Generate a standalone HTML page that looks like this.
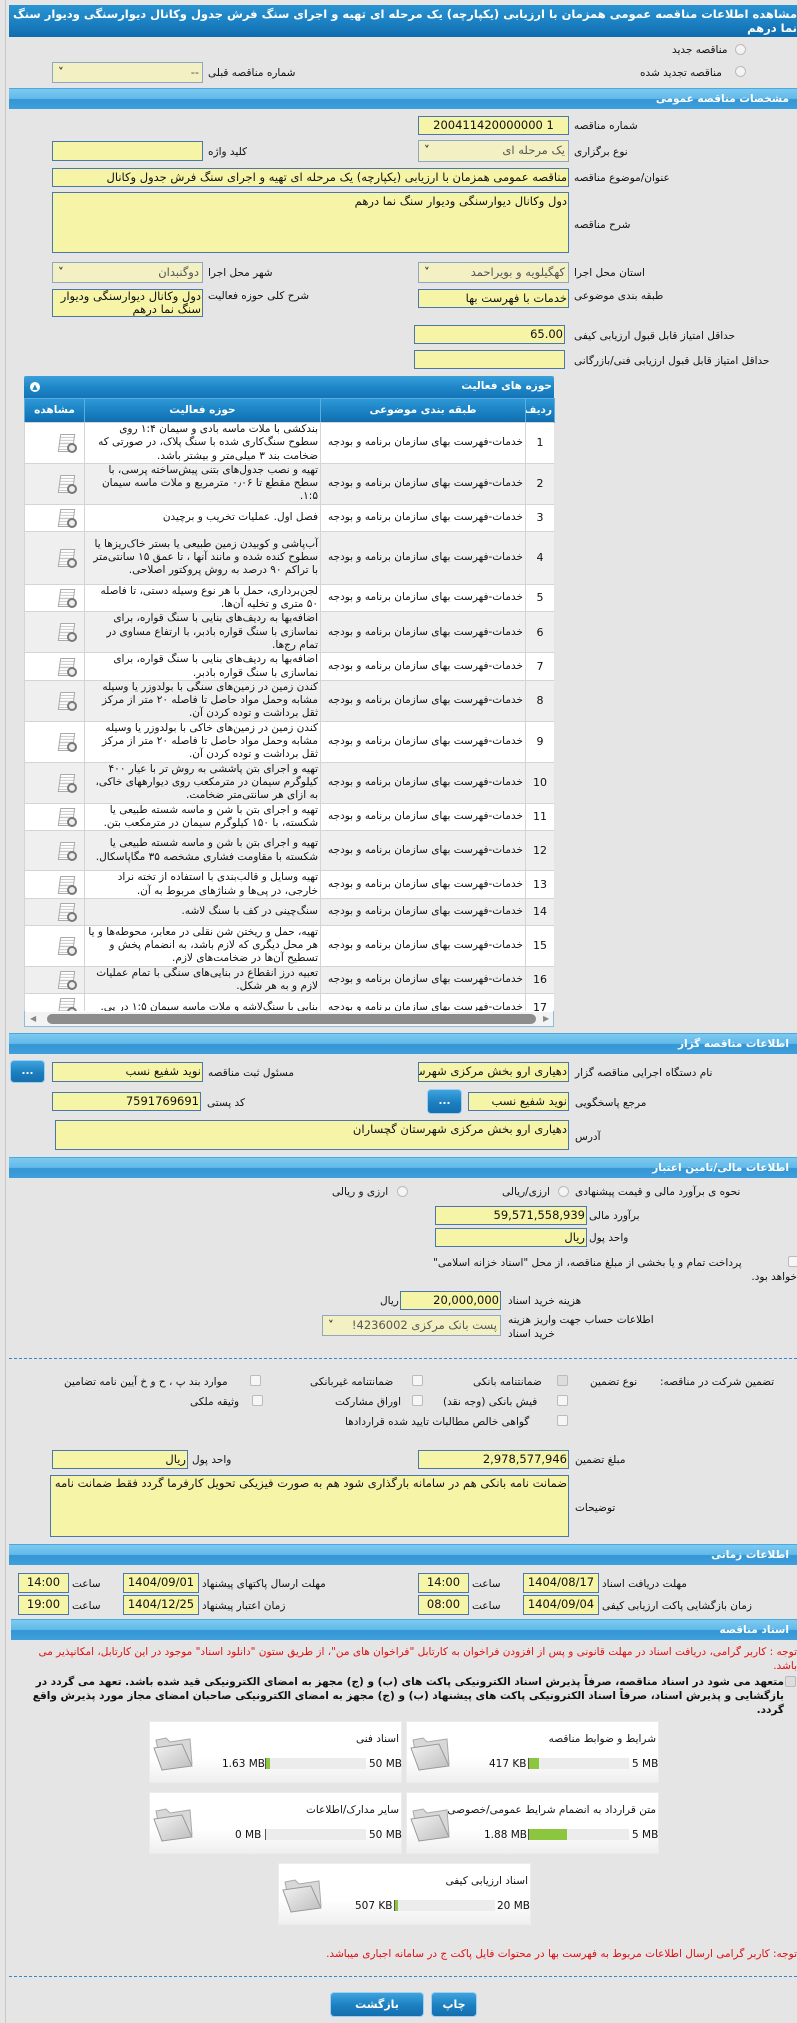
<!DOCTYPE html>
<html><head><meta charset="utf-8">
<style>
*{box-sizing:border-box;margin:0;padding:0}
body{width:797px;height:2023px;background:#e5e5e5;font-family:"DejaVu Sans","Liberation Sans",sans-serif;font-size:10.5px;color:#111;position:relative;overflow:hidden}
.a{position:absolute;white-space:nowrap;direction:rtl;line-height:14px}
.l{direction:ltr}
.bar{position:absolute;left:9px;right:0;height:21px;background:linear-gradient(#7ccaf1,#62b9e8 48%,#3596d5 52%,#3f9fdc);border-top:1px solid #4aa8e0;color:#fff;font-weight:bold;font-size:10.5px;direction:rtl;padding-right:8px;line-height:20px}
.in{position:absolute;background:#f6f4a6;border:1px solid #4a78ad;direction:rtl;white-space:nowrap;overflow:hidden;font-size:11.5px;line-height:17px;padding:0 1px}
.sel{position:absolute;background:#f3f1c4;border:1px solid #8fa7c2;direction:rtl;white-space:nowrap;overflow:hidden;font-size:11.5px;line-height:19px;padding:0 3px;color:#555}
.sel:after{content:"˅";position:absolute;left:5px;top:0;color:#333;font-weight:bold}
.radio{position:absolute;width:11px;height:11px;border-radius:50%;border:1px solid #bbb;background:#f4f4f4}
.cb{position:absolute;width:11px;height:11px;border:1px solid #bbb;background:#f6f6f6;border-radius:2px}
.btn{position:absolute;background:linear-gradient(#3ea3de,#1c7fc0 55%,#166fae);border-radius:4px;color:#fff;text-align:center;font-weight:bold;border:1px solid #9cd0f0}
table{border-collapse:collapse;table-layout:fixed;direction:rtl;font-size:10.5px}
td{border:1px solid #d4d4d4;overflow:hidden;vertical-align:middle;line-height:13.3px;padding:0 2px}
.tw{background:#fff}.tg{background:#efefef}
.box{position:absolute;width:253px;height:62px;background:linear-gradient(#fff,#fff 60%,#efefef);border:1px solid #ececec}
.red{color:#e01010}
#rows td:first-child{text-align:center;font-size:11px}
#rows td.ic{position:relative}
#rows td.ic:before{content:"";position:absolute;left:34px;top:50%;margin-top:-9px;width:13px;height:16px;border:1px solid #aaa;background:repeating-linear-gradient(#fff 0 2px,#c8c8c8 2px 3px);transform:skewX(-8deg)}
#rows td.ic:after{content:"";position:absolute;left:42px;top:50%;margin-top:0px;width:6px;height:6px;border:2px solid #777;border-radius:50%;background:#eee}
</style></head><body>
<div style="position:absolute;left:5px;top:0;width:1px;height:2023px;background:#c8c8c8"></div>

<div style="position:absolute;left:9px;right:0;top:5px;height:32px;background:linear-gradient(#2a94d2,#1d82c3 50%,#0f6cae);color:#fff;font-weight:bold;font-size:11.5px;direction:rtl;line-height:14px;padding-top:2px;white-space:nowrap;overflow:hidden">مشاهده اطلاعات مناقصه عمومی همزمان با ارزیابی (یکپارچه) یک مرحله ای تهیه و اجرای سنگ فرش جدول وکانال دیوارسنگی ودیوار سنگ<br>نما درهم</div>

<div class="radio" style="left:735px;top:44px"></div><div class="a" style="left:672px;top:43px">مناقصه جدید</div>
<div class="radio" style="left:735px;top:66px"></div><div class="a" style="left:640px;top:66px">مناقصه تجدید شده</div>
<div class="sel" style="left:52px;top:62px;width:151px;height:21px">--</div>
<div class="a" style="left:208px;top:66px">شماره مناقصه قبلی</div>

<div class="bar" style="top:88px">مشخصات مناقصه عمومی</div>

<div class="in" style="left:418px;top:116px;width:151px;height:19px;text-align:center;direction:ltr">200411420000000 1</div>
<div class="a" style="left:574px;top:119px">شماره مناقصه</div>
<div class="sel" style="left:418px;top:140px;width:151px;height:22px">یک مرحله ای</div>
<div class="a" style="left:574px;top:145px">نوع برگزاری</div>
<div class="in" style="left:52px;top:141px;width:151px;height:20px"></div>
<div class="a" style="left:208px;top:145px">کلید واژه</div>
<div class="in" style="left:52px;top:168px;width:517px;height:19px">مناقصه عمومی همزمان با ارزیابی (یکپارچه) یک مرحله ای تهیه و اجرای سنگ فرش جدول وکانال</div>
<div class="a" style="left:574px;top:171px">عنوان/موضوع مناقصه</div>
<div class="in" style="left:52px;top:192px;width:517px;height:61px;white-space:normal">دول وکانال دیوارسنگی ودیوار سنگ نما درهم</div>
<div class="a" style="left:574px;top:218px">شرح مناقصه</div>
<div class="sel" style="left:418px;top:262px;width:151px;height:21px">کهگیلویه و بویراحمد</div>
<div class="a" style="left:574px;top:266px">استان محل اجرا</div>
<div class="sel" style="left:52px;top:262px;width:151px;height:21px">دوگنبدان</div>
<div class="a" style="left:208px;top:266px">شهر محل اجرا</div>
<div class="in" style="left:418px;top:289px;width:151px;height:19px">خدمات با فهرست بها</div>
<div class="a" style="left:574px;top:289px">طبقه بندی موضوعی</div>
<div class="in" style="left:52px;top:289px;width:151px;height:28px;white-space:normal;line-height:13px">دول وکانال دیوارسنگی ودیوار سنگ نما درهم</div>
<div class="a" style="left:208px;top:289px">شرح کلی حوزه فعالیت</div>
<div class="in" style="left:414px;top:325px;width:151px;height:19px">65.00</div>
<div class="a" style="left:574px;top:329px">حداقل امتیاز قابل قبول ارزیابی کیفی</div>
<div class="in" style="left:414px;top:350px;width:151px;height:19px"></div>
<div class="a" style="left:574px;top:354px">حداقل امتیاز قابل قبول ارزیابی فنی/بازرگانی</div>

<div style="position:absolute;left:24px;top:376px;width:530px;height:651px;background:#fff;border:1px solid #8bbde0"></div>
<div style="position:absolute;left:24px;top:376px;width:530px;height:22px;background:linear-gradient(#3aa0dc,#1f87c8 50%,#1474b8);color:#fff;font-weight:bold;direction:rtl;line-height:20px;padding-right:2px;border-radius:3px 3px 0 0">حوزه های فعالیت</div>
<div style="position:absolute;left:30px;top:382px;width:10px;height:10px;border-radius:50%;background:#fff;color:#1f87c8;font-size:7px;line-height:10px;text-align:center">▲</div>
<table style="position:absolute;left:24px;top:398px;width:530px">
<colgroup><col style="width:29px"><col style="width:205px"><col style="width:236px"><col style="width:60px"></colgroup>
<tr style="height:24px;background:linear-gradient(#2e98d6,#1b82c4 50%,#0f6cae);color:#fff;font-weight:bold;text-align:center"><td style="border-color:#5aaee0">ردیف</td><td style="border-color:#5aaee0">طبقه بندی موضوعی</td><td style="border-color:#5aaee0">حوزه فعالیت</td><td style="border-color:#5aaee0">مشاهده</td></tr>
</table>
<div id="rows" style="position:absolute;left:24px;top:422px;width:530px;height:589px;overflow:hidden">
<table style="width:530px">
<colgroup><col style="width:29px"><col style="width:205px"><col style="width:236px"><col style="width:60px"></colgroup>
<tbody>
<tr class="tw" style="height:40px"><td>1</td><td>خدمات-فهرست بهای سازمان برنامه و بودجه</td><td>بندکشی با ملات ماسه بادی و سیمان ۱:۴ روی سطوح سنگ‌کاری شده با سنگ پلاک، در صورتی که ضخامت بند ۳ میلی‌متر و بیشتر باشد.</td><td class="ic"></td></tr>
<tr class="tg" style="height:40px"><td>2</td><td>خدمات-فهرست بهای سازمان برنامه و بودجه</td><td>تهیه و نصب جدول‌های بتنی پیش‌ساخته پرسی، با سطح مقطع تا ۰٫۰۶ مترمربع و ملات ماسه سیمان ۱:۵.</td><td class="ic"></td></tr>
<tr class="tw" style="height:27px"><td>3</td><td>خدمات-فهرست بهای سازمان برنامه و بودجه</td><td>فصل اول. عملیات تخریب و برچیدن</td><td class="ic"></td></tr>
<tr class="tg" style="height:53px"><td>4</td><td>خدمات-فهرست بهای سازمان برنامه و بودجه</td><td>آب‌پاشی و کوبیدن زمین طبیعی یا بستر خاک‌ریزها یا سطوح کنده شده و مانند آنها ، تا عمق ۱۵ سانتی‌متر با تراکم ۹۰ درصد به روش پروکتور اصلاحی.</td><td class="ic"></td></tr>
<tr class="tw" style="height:27px"><td>5</td><td>خدمات-فهرست بهای سازمان برنامه و بودجه</td><td>لجن‌برداری، حمل با هر نوع وسیله دستی، تا فاصله ۵۰ متری و تخلیه آن‌ها.</td><td class="ic"></td></tr>
<tr class="tg" style="height:40px"><td>6</td><td>خدمات-فهرست بهای سازمان برنامه و بودجه</td><td>اضافه‌بها به ردیف‌های بنایی با سنگ قواره، برای نماسازی با سنگ قواره بادبر، با ارتفاع مساوی در تمام رج‌ها.</td><td class="ic"></td></tr>
<tr class="tw" style="height:27px"><td>7</td><td>خدمات-فهرست بهای سازمان برنامه و بودجه</td><td>اضافه‌بها به ردیف‌های بنایی با سنگ قواره، برای نماسازی با سنگ قواره بادبر.</td><td class="ic"></td></tr>
<tr class="tg" style="height:40px"><td>8</td><td>خدمات-فهرست بهای سازمان برنامه و بودجه</td><td>کندن زمین در زمین‌های سنگی با بولدوزر یا وسیله مشابه وحمل مواد حاصل تا فاصله ۲۰ متر از مرکز ثقل برداشت و توده کردن آن.</td><td class="ic"></td></tr>
<tr class="tw" style="height:40px"><td>9</td><td>خدمات-فهرست بهای سازمان برنامه و بودجه</td><td>کندن زمین در زمین‌های خاکی با بولدوزر یا وسیله مشابه وحمل مواد حاصل تا فاصله ۲۰ متر از مرکز ثقل برداشت و توده کردن آن.</td><td class="ic"></td></tr>
<tr class="tg" style="height:41px"><td>10</td><td>خدمات-فهرست بهای سازمان برنامه و بودجه</td><td>تهیه و اجرای بتن پاششی به روش تر با عیار ۴۰۰ کیلوگرم سیمان در مترمکعب روی دیوارههای خاکی، به ازای هر سانتی‌متر ضخامت.</td><td class="ic"></td></tr>
<tr class="tw" style="height:27px"><td>11</td><td>خدمات-فهرست بهای سازمان برنامه و بودجه</td><td>تهیه و اجرای بتن با شن و ماسه شسته طبیعی یا شکسته، با ۱۵۰ کیلوگرم سیمان در مترمکعب بتن.</td><td class="ic"></td></tr>
<tr class="tg" style="height:40px"><td>12</td><td>خدمات-فهرست بهای سازمان برنامه و بودجه</td><td>تهیه و اجرای بتن با شن و ماسه شسته طبیعی یا شکسته با مقاومت فشاری مشخصه ۳۵ مگاپاسکال.</td><td class="ic"></td></tr>
<tr class="tw" style="height:27px"><td>13</td><td>خدمات-فهرست بهای سازمان برنامه و بودجه</td><td>تهیه وسایل و قالب‌بندی با استفاده از تخته نراد خارجی، در پی‌ها و شناژهای مربوط به آن.</td><td class="ic"></td></tr>
<tr class="tg" style="height:27px"><td>14</td><td>خدمات-فهرست بهای سازمان برنامه و بودجه</td><td>سنگ‌چینی در کف با سنگ لاشه.</td><td class="ic"></td></tr>
<tr class="tw" style="height:40px"><td>15</td><td>خدمات-فهرست بهای سازمان برنامه و بودجه</td><td>تهیه، حمل و ریختن شن نقلی در معابر، محوطه‌ها و یا هر محل دیگری که لازم باشد، به انضمام پخش و تسطیح آن‌ها در ضخامت‌های لازم.</td><td class="ic"></td></tr>
<tr class="tg" style="height:27px"><td>16</td><td>خدمات-فهرست بهای سازمان برنامه و بودجه</td><td>تعبیه درز انقطاع در بنایی‌های سنگی با تمام عملیات لازم و به هر شکل.</td><td class="ic"></td></tr>
<tr class="tw" style="height:27px"><td>17</td><td>خدمات-فهرست بهای سازمان برنامه و بودجه</td><td>بنایی با سنگ‌لاشه و ملات ماسه سیمان ۱:۵ در پی.</td><td class="ic"></td></tr>
</tbody></table></div>
<div style="position:absolute;left:25px;top:1012px;width:528px;height:14px;background:#f3f3f3"></div>
<div style="position:absolute;left:47px;top:1014px;width:489px;height:10px;background:#8d8d8d;border-radius:5px"></div>
<div class="a" style="left:30px;top:1012px;color:#888;font-size:8px">◀</div>
<div class="a" style="left:543px;top:1012px;color:#888;font-size:8px">▶</div>

<div class="bar" style="top:1033px">اطلاعات مناقصه گزار</div>
<div class="in" style="left:418px;top:1062px;width:151px;height:20px">دهیاری ارو بخش مرکزی شهرستان</div>
<div class="a" style="left:575px;top:1066px">نام دستگاه اجرایی مناقصه گزار</div>
<div class="in" style="left:52px;top:1062px;width:151px;height:20px">نوید شفیع نسب</div>
<div class="a" style="left:208px;top:1066px">مسئول ثبت مناقصه</div>
<div class="btn" style="left:10px;top:1060px;width:35px;height:23px;line-height:20px">...</div>
<div class="in" style="left:468px;top:1092px;width:101px;height:19px">نوید شفیع نسب</div>
<div class="btn" style="left:427px;top:1089px;width:35px;height:25px;line-height:22px">...</div>
<div class="a" style="left:575px;top:1096px">مرجع پاسخگویی</div>
<div class="in" style="left:52px;top:1092px;width:149px;height:19px">7591769691</div>
<div class="a" style="left:207px;top:1096px">کد پستی</div>
<div class="in" style="left:55px;top:1120px;width:514px;height:30px">دهیاری ارو بخش مرکزی شهرستان گچساران</div>
<div class="a" style="left:575px;top:1130px">آدرس</div>

<div class="bar" style="top:1157px">اطلاعات مالی/تامین اعتبار</div>
<div class="a" style="left:575px;top:1185px">نحوه ی برآورد مالی و قیمت پیشنهادی</div>
<div class="radio" style="left:558px;top:1186px"></div><div class="a" style="left:502px;top:1185px">ارزی/ریالی</div>
<div class="radio" style="left:397px;top:1186px"></div><div class="a" style="left:332px;top:1185px">ارزی و ریالی</div>
<div class="in" style="left:435px;top:1206px;width:152px;height:19px">59,571,558,939</div>
<div class="a" style="left:589px;top:1209px">برآورد مالی</div>
<div class="in" style="left:435px;top:1228px;width:152px;height:19px">ریال</div>
<div class="a" style="left:589px;top:1231px">واحد پول</div>
<div class="cb" style="left:788px;top:1256px"></div>
<div class="a" style="left:433px;top:1256px">پرداخت تمام و یا بخشی از مبلغ مناقصه، از محل "اسناد خزانه اسلامی"</div>
<div class="a" style="right:0;top:1270px">خواهد بود.</div>
<div class="in" style="left:400px;top:1291px;width:101px;height:19px">20,000,000</div>
<div class="a" style="left:380px;top:1294px">ریال</div>
<div class="a" style="left:508px;top:1294px">هزینه خرید اسناد</div>
<div class="sel" style="left:322px;top:1315px;width:179px;height:21px">پست بانک مرکزی 4236002!</div>
<div class="a" style="left:508px;top:1313px">اطلاعات حساب جهت واریز هزینه</div>
<div class="a" style="left:508px;top:1327px">خرید اسناد</div>
<div style="position:absolute;left:9px;right:0;top:1358px;border-top:1px dashed #3a88c8"></div>

<div class="a" style="left:660px;top:1375px">تضمین شرکت در مناقصه:</div>
<div class="a" style="left:590px;top:1375px">نوع تضمین</div>
<div class="cb" style="left:557px;top:1375px;background:#ddd"></div><div class="a" style="left:473px;top:1375px">ضمانتنامه بانکی</div>
<div class="cb" style="left:412px;top:1375px"></div><div class="a" style="left:310px;top:1375px">ضمانتنامه غیربانکی</div>
<div class="cb" style="left:250px;top:1375px"></div><div class="a" style="left:64px;top:1375px">موارد بند پ ، ح و خ آیین نامه تضامین</div>
<div class="cb" style="left:557px;top:1395px"></div><div class="a" style="left:443px;top:1395px">فیش بانکی (وجه نقد)</div>
<div class="cb" style="left:412px;top:1395px"></div><div class="a" style="left:335px;top:1395px">اوراق مشارکت</div>
<div class="cb" style="left:252px;top:1395px"></div><div class="a" style="left:190px;top:1395px">وثیقه ملکی</div>
<div class="cb" style="left:557px;top:1415px"></div><div class="a" style="left:345px;top:1415px">گواهی خالص مطالبات تایید شده قراردادها</div>
<div class="in" style="left:418px;top:1450px;width:151px;height:19px">2,978,577,946</div>
<div class="a" style="left:575px;top:1453px">مبلغ تضمین</div>
<div class="in" style="left:52px;top:1450px;width:136px;height:19px">ریال</div>
<div class="a" style="left:192px;top:1453px">واحد پول</div>
<div class="in" style="left:50px;top:1475px;width:519px;height:62px;white-space:normal;line-height:14px">ضمانت نامه بانکی هم در سامانه بارگذاری شود هم به صورت فیزیکی تحویل کارفرما گردد فقط ضمانت نامه</div>
<div class="a" style="left:575px;top:1501px">توضیحات</div>

<div class="bar" style="top:1544px">اطلاعات زمانی</div>
<div class="in" style="left:523px;top:1573px;width:76px;height:20px;text-align:center">1404/08/17</div>
<div class="a" style="left:602px;top:1577px">مهلت دریافت اسناد</div>
<div class="a" style="left:472px;top:1577px">ساعت</div>
<div class="in" style="left:418px;top:1573px;width:51px;height:20px;text-align:center">14:00</div>
<div class="in" style="left:123px;top:1573px;width:76px;height:20px;text-align:center">1404/09/01</div>
<div class="a" style="left:202px;top:1577px">مهلت ارسال پاکتهای پیشنهاد</div>
<div class="a" style="left:72px;top:1577px">ساعت</div>
<div class="in" style="left:18px;top:1573px;width:51px;height:20px;text-align:center">14:00</div>
<div class="in" style="left:523px;top:1595px;width:76px;height:20px;text-align:center">1404/09/04</div>
<div class="a" style="left:602px;top:1599px">زمان بازگشایی پاکت ارزیابی کیفی</div>
<div class="a" style="left:472px;top:1599px">ساعت</div>
<div class="in" style="left:418px;top:1595px;width:51px;height:20px;text-align:center">08:00</div>
<div class="in" style="left:123px;top:1595px;width:76px;height:20px;text-align:center">1404/12/25</div>
<div class="a" style="left:202px;top:1599px">زمان اعتبار پیشنهاد</div>
<div class="a" style="left:72px;top:1599px">ساعت</div>
<div class="in" style="left:18px;top:1595px;width:51px;height:20px;text-align:center">19:00</div>

<div class="bar" style="top:1619px;left:11px">اسناد مناقصه</div>
<div class="red" style="position:absolute;left:20px;right:0;top:1645px;direction:rtl;line-height:14px;font-size:10.5px">توجه : کاربر گرامی، دریافت اسناد در مهلت قانونی و پس از افزودن فراخوان به کارتابل "فراخوان های من"، از طریق ستون "دانلود اسناد" موجود در این کارتابل، امکانپذیر می باشد.</div>
<div class="cb" style="left:785px;top:1676px;background:#ddd"></div>
<div style="position:absolute;left:10px;right:0;top:1675px;direction:rtl;line-height:14px;font-weight:bold;font-size:10.5px;padding-right:13px">متعهد می شود در اسناد مناقصه، صرفاً پذیرش اسناد الکترونیکی پاکت های (ب) و (ج) مجهز به امضای الکترونیکی قید شده باشد. تعهد می گردد در بازگشایی و پذیرش اسناد، صرفاً اسناد الکترونیکی پاکت های پیشنهاد (ب) و (ج) مجهز به امضای الکترونیکی صاحبان امضای مجاز مورد پذیرش واقع گردد.</div>

<svg width="0" height="0" style="position:absolute"><defs><linearGradient id="fg" x1="0" y1="0" x2="1" y2="1"><stop offset="0" stop-color="#f4f4f4"/><stop offset="1" stop-color="#bdbdbd"/></linearGradient></defs></svg>
<div class="box" style="left:406px;top:1721px"></div>
<div class="box" style="left:149px;top:1721px"></div>
<div class="box" style="left:406px;top:1792px"></div>
<div class="box" style="left:149px;top:1792px"></div>
<div class="box" style="left:278px;top:1863px"></div>
<svg style="position:absolute;left:409px;top:1734px" width="42" height="38" viewBox="0 0 42 38"><path d="M4 6 L14 4 L18 8 L38 5 L40 30 L10 36 Z" fill="#d8d8d8" stroke="#aaa"/><path d="M2 14 L30 10 L40 32 L10 36 Z" fill="url(#fg)" stroke="#999"/></svg>
<svg style="position:absolute;left:152px;top:1734px" width="42" height="38" viewBox="0 0 42 38"><path d="M4 6 L14 4 L18 8 L38 5 L40 30 L10 36 Z" fill="#d8d8d8" stroke="#aaa"/><path d="M2 14 L30 10 L40 32 L10 36 Z" fill="url(#fg)" stroke="#999"/></svg>
<svg style="position:absolute;left:409px;top:1805px" width="42" height="38" viewBox="0 0 42 38"><path d="M4 6 L14 4 L18 8 L38 5 L40 30 L10 36 Z" fill="#d8d8d8" stroke="#aaa"/><path d="M2 14 L30 10 L40 32 L10 36 Z" fill="url(#fg)" stroke="#999"/></svg>
<svg style="position:absolute;left:152px;top:1805px" width="42" height="38" viewBox="0 0 42 38"><path d="M4 6 L14 4 L18 8 L38 5 L40 30 L10 36 Z" fill="#d8d8d8" stroke="#aaa"/><path d="M2 14 L30 10 L40 32 L10 36 Z" fill="url(#fg)" stroke="#999"/></svg>
<svg style="position:absolute;left:281px;top:1876px" width="42" height="38" viewBox="0 0 42 38"><path d="M4 6 L14 4 L18 8 L38 5 L40 30 L10 36 Z" fill="#d8d8d8" stroke="#aaa"/><path d="M2 14 L30 10 L40 32 L10 36 Z" fill="url(#fg)" stroke="#999"/></svg>

<div class="a" style="right:141px;top:1732px">شرایط و ضوابط مناقصه</div>
<div class="a l" style="left:632px;top:1757px">5 MB</div>
<div style="position:absolute;left:528px;top:1758px;width:101px;height:11px;background:#ececec;border-left:1px solid #555"></div>
<div style="position:absolute;left:529px;top:1758px;width:10px;height:11px;background:#8cc63f"></div>
<div class="a l" style="left:489px;top:1757px">417 KB</div>

<div class="a" style="right:398px;top:1732px">اسناد فنی</div>
<div class="a l" style="left:369px;top:1757px">50 MB</div>
<div style="position:absolute;left:265px;top:1758px;width:101px;height:11px;background:#ececec;border-left:1px solid #555"></div>
<div style="position:absolute;left:266px;top:1758px;width:4px;height:11px;background:#8cc63f"></div>
<div class="a l" style="left:222px;top:1757px">1.63 MB</div>

<div class="a" style="right:141px;top:1803px">متن قرارداد به انضمام شرایط عمومی/خصوصی</div>
<div class="a l" style="left:632px;top:1828px">5 MB</div>
<div style="position:absolute;left:528px;top:1829px;width:101px;height:11px;background:#ececec;border-left:1px solid #555"></div>
<div style="position:absolute;left:529px;top:1829px;width:38px;height:11px;background:#8cc63f"></div>
<div class="a l" style="left:484px;top:1828px">1.88 MB</div>

<div class="a" style="right:398px;top:1803px">سایر مدارک/اطلاعات</div>
<div class="a l" style="left:369px;top:1828px">50 MB</div>
<div style="position:absolute;left:265px;top:1829px;width:101px;height:11px;background:#ececec;border-left:1px solid #555"></div>
<div class="a l" style="left:235px;top:1828px">0 MB</div>

<div class="a" style="right:269px;top:1874px">اسناد ارزیابی کیفی</div>
<div class="a l" style="left:497px;top:1899px">20 MB</div>
<div style="position:absolute;left:394px;top:1900px;width:101px;height:11px;background:#ececec;border-left:1px solid #555"></div>
<div style="position:absolute;left:395px;top:1900px;width:3px;height:11px;background:#8cc63f"></div>
<div class="a l" style="left:355px;top:1899px">507 KB</div>

<div class="a red" style="right:0;top:1947px;font-size:10.5px">توجه: کاربر گرامی ارسال اطلاعات مربوط به فهرست بها در محتوات فایل پاکت ج در سامانه اجباری میباشد.</div>
<div style="position:absolute;left:9px;right:0;top:1976px;border-top:1px dashed #3a88c8"></div>
<div class="btn" style="left:330px;top:1992px;width:94px;height:25px;line-height:23px;font-size:11px">بازگشت</div>
<div class="btn" style="left:431px;top:1992px;width:46px;height:25px;line-height:23px;font-size:11px">چاپ</div>
</body></html>
